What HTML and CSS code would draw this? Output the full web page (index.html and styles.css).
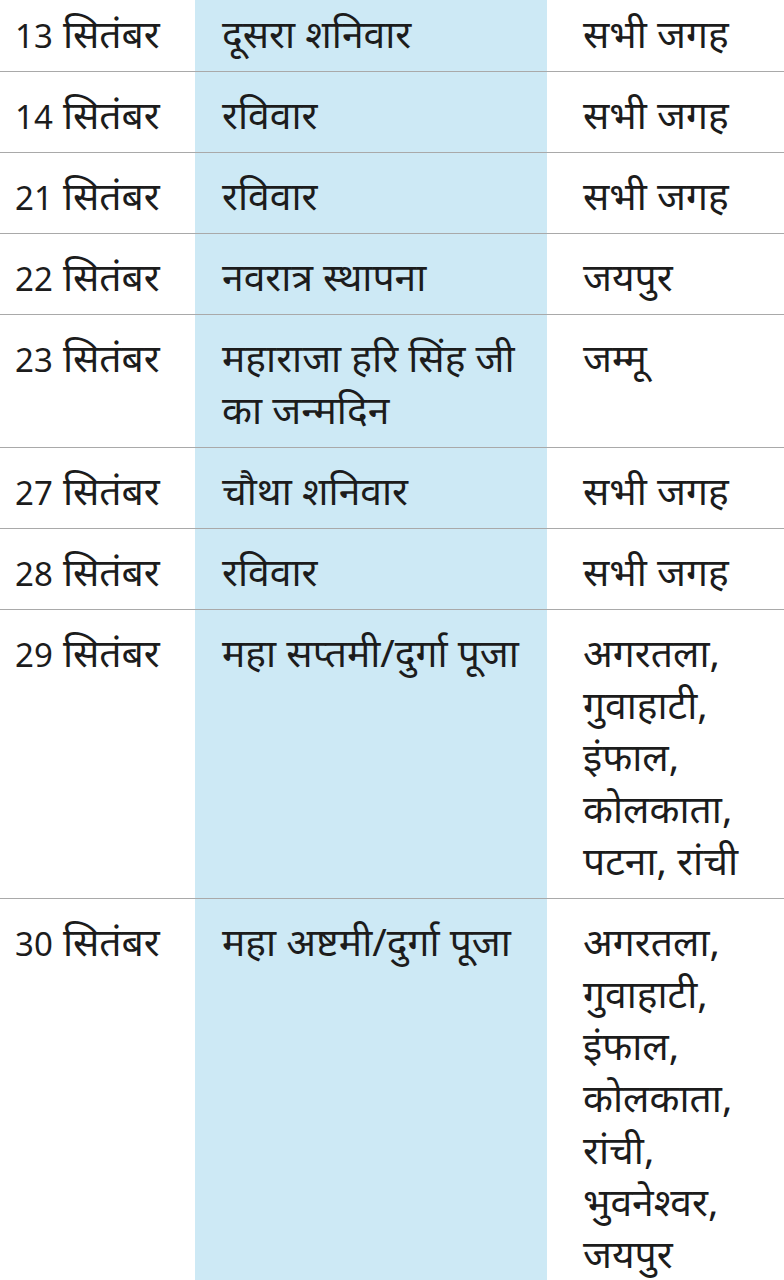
FILE: index.html
```html
<!DOCTYPE html>
<html lang="hi">
<head>
<meta charset="utf-8">
<title>सितंबर छुट्टियां</title>
<link rel="stylesheet" href="styles.css">
</head>
<body>
<div class="table">
  <div class="row"><div class="cell date"><span class="num">13</span> सितंबर</div><div class="cell name">दूसरा शनिवार</div><div class="cell place">सभी जगह</div></div>
  <div class="row"><div class="cell date"><span class="num">14</span> सितंबर</div><div class="cell name">रविवार</div><div class="cell place">सभी जगह</div></div>
  <div class="row"><div class="cell date"><span class="num">21</span> सितंबर</div><div class="cell name">रविवार</div><div class="cell place">सभी जगह</div></div>
  <div class="row"><div class="cell date"><span class="num">22</span> सितंबर</div><div class="cell name">नवरात्र स्थापना</div><div class="cell place">जयपुर</div></div>
  <div class="row"><div class="cell date"><span class="num">23</span> सितंबर</div><div class="cell name">महाराजा हरि सिंह जी<br>का जन्मदिन</div><div class="cell place">जम्मू</div></div>
  <div class="row"><div class="cell date"><span class="num">27</span> सितंबर</div><div class="cell name">चौथा शनिवार</div><div class="cell place">सभी जगह</div></div>
  <div class="row"><div class="cell date"><span class="num">28</span> सितंबर</div><div class="cell name">रविवार</div><div class="cell place">सभी जगह</div></div>
  <div class="row"><div class="cell date"><span class="num">29</span> सितंबर</div><div class="cell name">महा सप्तमी/दुर्गा पूजा</div><div class="cell place">अगरतला,<br>गुवाहाटी,<br>इंफाल,<br>कोलकाता,<br>पटना, रांची</div></div>
  <div class="row"><div class="cell date"><span class="num">30</span> सितंबर</div><div class="cell name">महा अष्टमी/दुर्गा पूजा</div><div class="cell place">अगरतला,<br>गुवाहाटी,<br>इंफाल,<br>कोलकाता,<br>रांची,<br>भुवनेश्वर,<br>जयपुर</div></div>
</div>
</body>
</html>
```
FILE: styles.css
```css
html, body {
  margin: 0;
  padding: 0;
  background: #ffffff;
}
body {
  width: 784px;
  overflow: hidden;
  font-family: "Noto Sans", "Noto Sans Devanagari", sans-serif;
  color: #1c1c1c;
}
.table {
  margin-top: -9px;
}
.row {
  display: grid;
  grid-template-columns: 195px 352px 1fr;
  border-bottom: 1px solid #a9a9a9;
}
.cell {
  font-size: 39px;
  line-height: 52px;
  padding: 16px 0 12px;
  white-space: nowrap;
}
.num {
  font-size: 33px;
  line-height: 1;
}
.date {
  padding-left: 15px;
}
.name {
  background: #cde9f5;
  padding-left: 27px;
}
.place {
  padding-left: 36px;
}
```
